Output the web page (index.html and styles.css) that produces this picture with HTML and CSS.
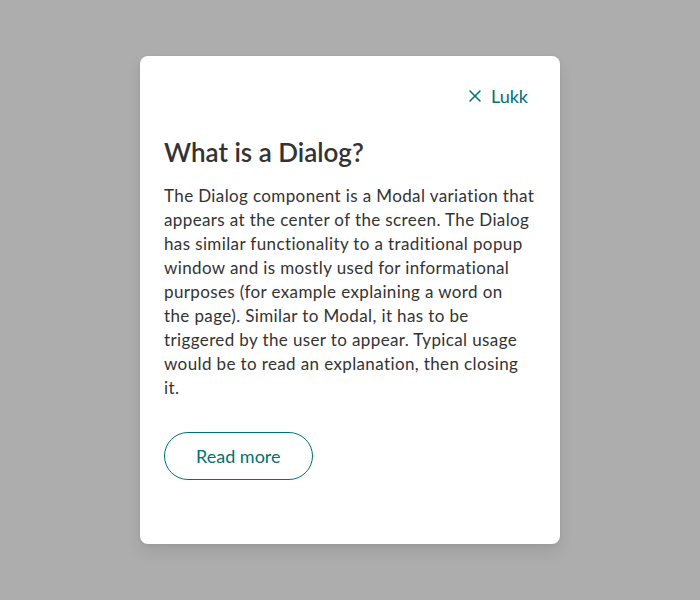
FILE: index.html
```html
<!DOCTYPE html>
<html lang="en">
<head>
<meta charset="utf-8">
<title>Dialog</title>
<link rel="stylesheet" href="styles.css">
</head>
<body>
<div class="overlay">
  <div class="dialog" role="dialog" aria-labelledby="dlg-title">
    <div class="dialog-header">
      <button class="close-btn" type="button">
        <svg class="close-icon" width="12" height="12" viewBox="0 0 12 12" aria-hidden="true">
          <path d="M1 1 L11 11 M11 1 L1 11" stroke="currentColor" stroke-width="1.5" stroke-linecap="round" fill="none"/>
        </svg>
        <span>Lukk</span>
      </button>
    </div>
    <h1 class="dialog-title" id="dlg-title">What is a Dialog?</h1>
    <p class="dialog-text">The Dialog component is a Modal variation that appears at the center of the screen. The Dialog has similar functionality to a traditional popup window and is mostly used for informational purposes (for example explaining a word on the&nbsp;page). Similar to Modal, it has to be triggered by the user to appear. Typical usage would be to read an explanation, then closing it.</p>
    <div class="dialog-actions">
      <button class="secondary-btn" type="button">Read more</button>
    </div>
  </div>
</div>
</body>
</html>
```

FILE: styles.css
```css
* { box-sizing: border-box; }
html, body {
  margin: 0;
  padding: 0;
  height: 100%;
}
body {
  background: #adadad;
  font-family: Lato, "Open Sans", "Liberation Sans", sans-serif;
  color: #333333;
}
.overlay {
  height: 100%;
  display: flex;
  align-items: center;
  justify-content: center;
}
.dialog {
  width: 420px;
  background: #ffffff;
  border-radius: 8px;
  padding: 24px 24px 64px;
  box-shadow: 0 8px 16px rgba(0, 0, 0, 0.08), 0 1px 4px rgba(0, 0, 0, 0.06);
}
.dialog-header {
  display: flex;
  justify-content: flex-end;
}
.close-btn {
  display: flex;
  align-items: center;
  gap: 10px;
  height: 32px;
  padding: 0 8px;
  border: 0;
  background: transparent;
  color: #007272;
  font-family: inherit;
  font-size: 18px;
  cursor: pointer;
}
.close-icon { display: block; }
.dialog-title {
  margin: 24px 0 0;
  font-size: 26px;
  line-height: 32px;
  font-weight: 600;
  color: #333333;
}
.dialog-text {
  margin: 16px 0 0;
  font-size: 17px;
  line-height: 24px;
  letter-spacing: 0.38px;
}
.dialog-actions {
  margin-top: 32px;
  display: flex;
}
.secondary-btn {
  height: 48px;
  padding: 0 31px;
  border: 1px solid #007272;
  border-radius: 24px;
  background: #ffffff;
  color: #007272;
  font-family: inherit;
  font-size: 18px;
  cursor: pointer;
}
```
